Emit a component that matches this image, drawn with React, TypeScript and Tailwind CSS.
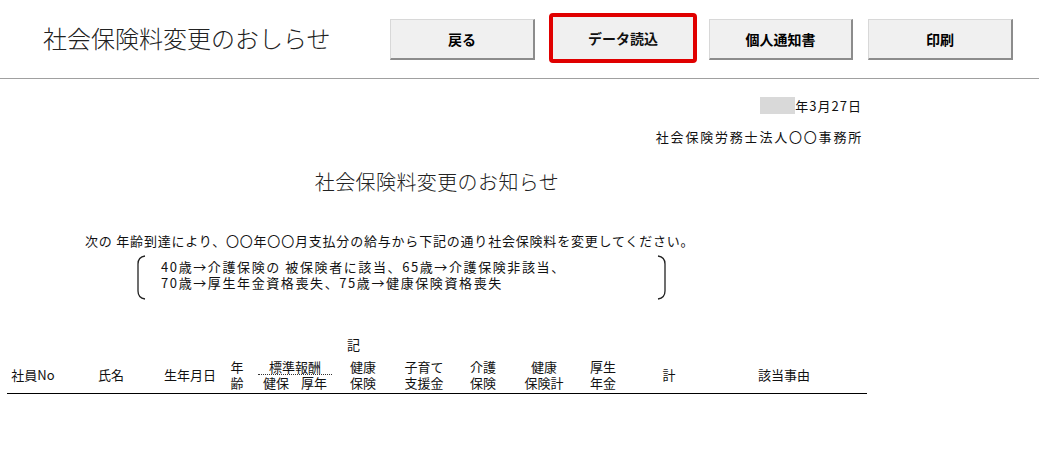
import React from "react";

const jp = { fontFamily: '"Noto Sans CJK JP", "Noto Sans", sans-serif' };

function ToolButton({ label, className = "" }: { label: string; className?: string }) {
  return (
    <button
      className={`flex items-center justify-center bg-[#f0f0f0] border-t border-l border-[#d8d8d8] border-r-2 border-b-2 border-r-[#8c8c8c] border-b-[#8c8c8c] text-[14px] font-bold text-black ${className}`}
    >
      {label}
    </button>
  );
}

function Bracket({ side }: { side: "left" | "right" }) {
  const d = side === "left" ? "M8 1 Q1 2 1 9 L1 36 Q1 43 8 44" : "M1 1 Q8 2 8 9 L8 36 Q8 43 1 44";
  return (
    <svg width="9" height="45" viewBox="0 0 9 45" className="shrink-0">
      <path d={d} fill="none" stroke="#222" strokeWidth="1.3" />
    </svg>
  );
}

function Col({ w, lines, className = "" }: { w: number; lines: string[]; className?: string }) {
  return (
    <div className={`flex flex-col items-center justify-end leading-[16px] ${className}`} style={{ width: w }}>
      {lines.map((l) => (
        <span key={l}>{l}</span>
      ))}
    </div>
  );
}

export default function App() {
  return (
    <div className="w-[1039px] h-[454px] bg-white text-[#111] overflow-hidden" style={jp}>
      {/* toolbar */}
      <header className="flex items-start h-[79px] border-b border-[#a0a0a0]">
        <div className="w-[390px] pl-[43px] pt-[22px] text-[24px] font-light leading-[32px] text-[#222]">
          社会保険料変更のおしらせ
        </div>
        <ToolButton label="戻る" className="mt-[19px] w-[145px] h-[41px]" />
        <div className="ml-[14px] mt-[13px] w-[148px] h-[50px] rounded-[4px] border-[4px] border-[#e00000] bg-[#f0f0f0] flex items-center justify-center text-[14px] font-bold">
          データ読込
        </div>
        <ToolButton label="個人通知書" className="ml-[12px] mt-[19px] w-[144px] h-[41px]" />
        <ToolButton label="印刷" className="ml-[15px] mt-[19px] w-[145px] h-[41px]" />
      </header>

      {/* notice document */}
      <main className="ml-[7px] w-[860px] text-[13px]">
        <div className="mt-[18px] flex justify-end items-center pr-[5px] leading-[16px]">
          <span className="inline-block w-[35px] h-[17px] bg-[#d9d9d9]" />
          <span className="tracking-[1px]">年3月27日</span>
        </div>
        <div className="mt-[15px] text-right pr-[4px] leading-[16px] tracking-[1.8px]">
          社会保険労務士法人〇〇事務所
        </div>

        <h1 className="mt-[25px] text-center text-[20px] font-light leading-[24px] tracking-[0.4px] text-[#222]">
          社会保険料変更のお知らせ
        </h1>

        <p className="mt-[39px] pl-[78px] leading-[16px] tracking-[0.8px]">
          次の 年齢到達により、〇〇年〇〇月支払分の給与から下記の通り社会保険料を変更してください。
        </p>

        <div className="mt-[6px] ml-[130px] w-[529px] flex items-stretch">
          <Bracket side="left" />
          <div className="flex-1 pl-[15px] pt-[4px] leading-[16px] tracking-[1.6px]">
            <div>40歳→介護保険の 被保険者に該当、65歳→介護保険非該当、</div>
            <div>70歳→厚生年金資格喪失、75歳→健康保険資格喪失</div>
          </div>
          <Bracket side="right" />
        </div>

        {/* column headings */}
        <div className="mt-[37px] pl-[340px] leading-[16px]">記</div>
        <div className="mt-[6px] flex items-end pb-[2px] border-b border-black">
          <Col w={52} lines={["社員No"]} className="pb-[8px]" />
          <Col w={104} lines={["氏名"]} className="pb-[8px]" />
          <Col w={54} lines={["生年月日"]} className="pb-[8px]" />
          <Col w={40} lines={["年", "齢"]} />
          <div className="w-[76px] flex flex-col">
            <div className="mx-[1px] text-center border-b border-dotted border-[#333] leading-[15px]">標準報酬</div>
            <div className="flex leading-[16px]">
              <span className="w-1/2 text-center">健保</span>
              <span className="w-1/2 text-center">厚年</span>
            </div>
          </div>
          <Col w={60} lines={["健康", "保険"]} />
          <Col w={62} lines={["子育て", "支援金"]} />
          <Col w={56} lines={["介護", "保険"]} />
          <Col w={66} lines={["健康", "保険計"]} />
          <Col w={52} lines={["厚生", "年金"]} />
          <Col w={80} lines={["計"]} className="pb-[8px]" />
          <Col w={150} lines={["該当事由"]} className="pb-[8px]" />
        </div>
      </main>
    </div>
  );
}
